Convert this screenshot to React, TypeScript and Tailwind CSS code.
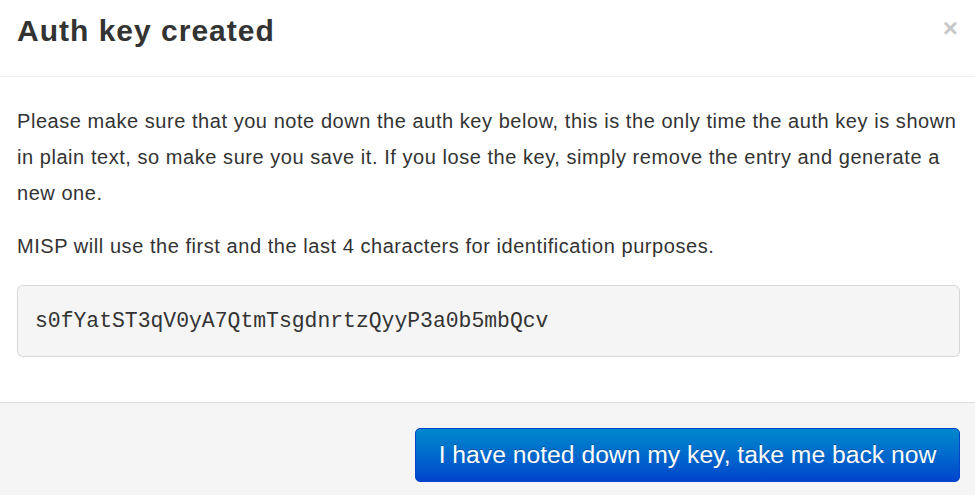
export default function App() {
  return (
    <div className="w-[975px] h-[495px] bg-white flex flex-col overflow-hidden font-['Liberation_Sans',Arial,sans-serif] text-[#333]">
      <div className="h-[77px] shrink-0 border-b border-[#eee] flex items-center justify-between pl-[17px] pr-[17px]">
        <h3 className="text-[30px] tracking-[1px] font-bold text-[#333] leading-none -mt-[15px]">
          Auth key created
        </h3>
        <span className="text-[26px] font-bold text-[#c8c8c8] leading-none -mt-[20px]">
          ×
        </span>
      </div>

      <div className="flex-1 pl-[17px] pr-[15px] pt-[26px]">
        <p className="text-[20px] tracking-[0.55px] leading-[36px] text-[#333] mb-[17px]">
          Please make sure that you note down the auth key below, this is the
          only time the auth key is shown in plain text, so make sure you save
          it. If you lose the key, simply remove the entry and generate a new
          one.
        </p>
        <p className="text-[20px] tracking-[0.55px] leading-[36px] text-[#333] mb-[21px]">
          MISP will use the first and the last 4 characters for identification
          purposes.
        </p>
        <pre className="h-[72px] bg-[#f5f5f5] border border-[#ccc]/70 rounded-[6px] px-[17px] flex items-center text-[21.4px] font-['Liberation_Mono',monospace] text-[#333]">
          s0fYatST3qV0yA7QtmTsgdnrtzQyyP3a0b5mbQcv
        </pre>
      </div>

      <div className="h-[93px] shrink-0 bg-[#f5f5f5] border-t border-[#ddd] flex items-center justify-end pr-[15px] pt-[12px]">
        <button className="h-[54px] w-[545px] rounded-[5px] border border-[#0044cc] bg-gradient-to-b from-[#0088cc] to-[#0044cc] text-white text-[24.7px] font-['Liberation_Sans',Arial,sans-serif] [text-shadow:0_-1px_0_rgba(0,0,0,0.25)]">
          I have noted down my key, take me back now
        </button>
      </div>
    </div>
  );
}
